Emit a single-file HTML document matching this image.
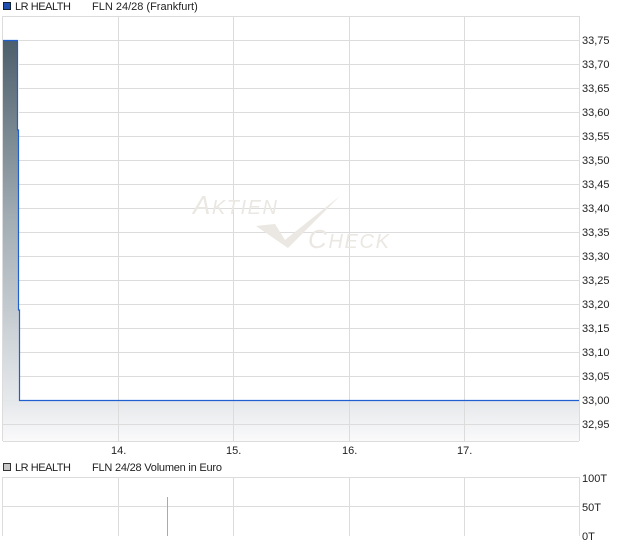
<!DOCTYPE html>
<html><head><meta charset="utf-8"><style>
body{margin:0;width:620px;height:546px;background:#fff;overflow:hidden;font-family:"Liberation Sans",sans-serif}
svg text{font-family:"Liberation Sans",sans-serif;font-size:11px;fill:#222}
</style></head><body>
<svg width="620" height="546" xmlns="http://www.w3.org/2000/svg">
<defs>
<linearGradient id="g1" x1="0" y1="0" x2="0" y2="1">
<stop offset="0" stop-color="#4d5f6c"/><stop offset="0.5" stop-color="#a2adb4"/><stop offset="1" stop-color="#e6e9ec"/>
</linearGradient>
<linearGradient id="g2" x1="0" y1="0" x2="0" y2="1">
<stop offset="0" stop-color="#e4e7ea"/><stop offset="1" stop-color="#fafafb"/>
</linearGradient>
</defs>
<rect x="3.5" y="2.5" width="7" height="7" fill="#1f4fb0" stroke="#123" stroke-width="1"/>
<text x="15" y="10" textLength="56">LR HEALTH</text>
<text x="92" y="10">FLN 24/28 (Frankfurt)</text>
<rect x="3" y="400" width="576" height="41" fill="url(#g2)"/>
<path d="M3 40 H17 V130 H18 V310 H19 V400 H3Z" fill="url(#g1)"/>
<g stroke="#dcdcdc" stroke-width="1">
<line x1="3" y1="16.5" x2="579" y2="16.5"/>
<line x1="19" y1="40.5" x2="579" y2="40.5"/><line x1="19" y1="64.5" x2="579" y2="64.5"/>
<line x1="19" y1="88.5" x2="579" y2="88.5"/><line x1="19" y1="112.5" x2="579" y2="112.5"/>
<line x1="19" y1="136.5" x2="579" y2="136.5"/><line x1="19" y1="160.5" x2="579" y2="160.5"/>
<line x1="19" y1="184.5" x2="579" y2="184.5"/><line x1="19" y1="208.5" x2="579" y2="208.5"/>
<line x1="19" y1="232.5" x2="579" y2="232.5"/><line x1="19" y1="256.5" x2="579" y2="256.5"/>
<line x1="19" y1="280.5" x2="579" y2="280.5"/><line x1="19" y1="304.5" x2="579" y2="304.5"/>
<line x1="19" y1="328.5" x2="579" y2="328.5"/><line x1="19" y1="352.5" x2="579" y2="352.5"/>
<line x1="19" y1="376.5" x2="579" y2="376.5"/><line x1="3" y1="424.5" x2="579" y2="424.5"/>
<line x1="3" y1="441.5" x2="579" y2="441.5"/>
<line x1="2.5" y1="16" x2="2.5" y2="441"/><line x1="579.5" y1="16" x2="579.5" y2="441"/>
<line x1="118.5" y1="16" x2="118.5" y2="441"/><line x1="233.5" y1="16" x2="233.5" y2="441"/>
<line x1="349.5" y1="16" x2="349.5" y2="441"/><line x1="464.5" y1="16" x2="464.5" y2="441"/>
</g>
<text x="193" y="214" textLength="84" style="font-size:26px;fill:#ebe7e2;font-style:italic">A<tspan style="font-size:20px">KTIEN</tspan></text>
<text x="308" y="248" textLength="81" style="font-size:26px;fill:#ebe7e2;font-style:italic">C<tspan style="font-size:20px">HECK</tspan></text>
<path d="M256 226 L275 224 L285 240 L340 196 L288 248 Z" fill="#ebe7e2"/>
<path d="M3 40.5 H17.5 V130 H18.5 V310 H19.5 V400.5 H579" fill="none" stroke="#1f5fd0" stroke-width="1.2"/>
<g>
<text x="582" y="44">33,75</text><text x="582" y="68">33,70</text><text x="582" y="92">33,65</text>
<text x="582" y="116">33,60</text><text x="582" y="140">33,55</text><text x="582" y="164">33,50</text>
<text x="582" y="188">33,45</text><text x="582" y="212">33,40</text><text x="582" y="236">33,35</text>
<text x="582" y="260">33,30</text><text x="582" y="284">33,25</text><text x="582" y="308">33,20</text>
<text x="582" y="332">33,15</text><text x="582" y="356">33,10</text><text x="582" y="380">33,05</text>
<text x="582" y="404">33,00</text><text x="582" y="428">32,95</text>
</g>
<text x="111" y="454">14.</text><text x="226" y="454">15.</text><text x="342" y="454">16.</text><text x="457" y="454">17.</text>
<rect x="3.5" y="463.5" width="7" height="7" fill="#c8c8c8" stroke="#333" stroke-width="1"/>
<text x="15" y="471" textLength="56">LR HEALTH</text>
<text x="92" y="471" textLength="130">FLN 24/28 Volumen in Euro</text>
<g stroke="#dcdcdc" stroke-width="1">
<line x1="3" y1="477.5" x2="579" y2="477.5"/><line x1="3" y1="506.5" x2="579" y2="506.5"/>
<line x1="2.5" y1="477" x2="2.5" y2="536"/><line x1="579.5" y1="477" x2="579.5" y2="536"/>
<line x1="118.5" y1="477" x2="118.5" y2="536"/><line x1="233.5" y1="477" x2="233.5" y2="536"/>
<line x1="349.5" y1="477" x2="349.5" y2="536"/><line x1="464.5" y1="477" x2="464.5" y2="536"/>
</g>
<line x1="167.5" y1="497" x2="167.5" y2="536" stroke="#aaa"/>
<text x="582" y="482">100T</text><text x="582" y="511">50T</text><text x="582" y="540">0T</text>
</svg>
</body></html>
